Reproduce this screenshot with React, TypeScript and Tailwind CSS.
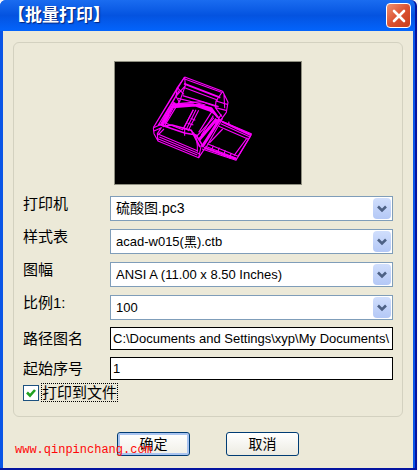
import React, { useState } from 'react';

const fields = [
  { id: 'printer', label: '打印机', options: ['硫酸图.pc3'], textSize: 'text-[14px]' },
  { id: 'style', label: '样式表', options: ['acad-w015(黑).ctb'], textSize: 'text-[13px]' },
  { id: 'paper', label: '图幅', options: ['ANSI A (11.00 x 8.50 Inches)'], textSize: 'text-[13px]' },
  { id: 'scale', label: '比例1:', options: ['100'], textSize: 'text-[13px]' },
];

function Preview() {
  return (
    <svg
      viewBox="29 21 558 366"
      className="mx-auto h-[124px] w-[188px] border border-[#8f8f80] bg-black"
      fill="none"
      stroke="#fa00fa"
      strokeWidth="3.4"
      strokeLinejoin="round"
      aria-label="预览"
    >
      {/* upper rail */}
      <path d="M238 66 352 109 M238 72 348 112 M238 98 338 136 M232 122 340 155 M218 130 300 150" />
      <path d="M236 86 345 128" strokeWidth="6" />
      <path d="M352 109 368 142 363 172 345 197 M352 109 332 138 330 158 350 185 M332 138 366 148 M330 158 362 166 M356 118 358 160" />
      <path d="M238 66 216 98 212 124 222 142 M238 66 240 92 222 142 M216 98 236 118 M212 124 240 92" />
      {/* left rails */}
      <path d="M238 66 144 218 M216 98 150 208 M222 106 158 212 M212 124 166 208 M224 136 178 212" />
      <path d="M208 142 168 212" strokeWidth="8" />
      {/* opening */}
      <path d="M202 156 280 150 318 160 338 188 M206 148 262 148 324 170" strokeWidth="7" />
      <path d="M204 158 180 204 232 224 264 164 M218 146 290 140 336 156 M190 180 172 214" />
      <path d="M264 164 234 222 M272 164 242 224 M280 166 248 228 M318 172 280 232 M324 182 288 240 M306 160 342 190" />
      <path d="M256 190 270 196 M246 204 264 210" />
      {/* right rails */}
      <path d="M344 192 290 276 M334 192 280 256" strokeWidth="9" />
      <path d="M352 190 298 284 M326 188 272 246 M348 178 330 206" />
      {/* lower front */}
      <path d="M160 208 238 234 272 240 292 272 M172 214 200 210 258 226 284 276" strokeWidth="5" />
      <path d="M144 218 146 236 158 258 280 308 296 284 M144 218 164 210 M156 236 278 288 M162 246 282 296 M154 250 276 300 M146 228 168 218 156 236 158 258" />
      <path d="M238 220 238 242 M176 222 158 240 M264 232Q278 250 276 290 M288 270 280 308" />
      {/* tab */}
      <path d="M342 196 438 236 434 246 392 316 290 282 M370 200 372 210 M346 206 434 246 M340 214 428 252 M306 266 398 304 M300 274 394 310" />
      <path d="M350 200 436 240 M296 278 392 312" strokeWidth="6" />
      <path d="M352 222 312 264 M426 248 386 302 M438 238 398 304 M324 272 318 288 M342 278 336 294 M360 286 354 302 M378 294 372 310" />
    </svg>
  );
}

function Chevron() {
  return (
    <span className="pointer-events-none absolute inset-y-0.5 right-0.5 flex w-[18px] items-center justify-center rounded-sm bg-linear-to-b from-[#d0defc] to-[#b4c8f6]">
      <svg viewBox="0 0 10 8" className="h-2 w-2.5" fill="none" stroke="#4d6185" strokeWidth="2.6">
        <path d="M1 1.5 5 5.5 9 1.5" />
      </svg>
    </span>
  );
}

export default function App() {
  const [toFile, setToFile] = useState(true);
  const [path, setPath] = useState('C:\\Documents and Settings\\xyp\\My Documents\\');
  const [start, setStart] = useState('1');

  return (
    <div className="min-h-screen bg-[#f4f4fa] pr-px font-['Liberation_Sans','Noto_Sans_CJK_SC',sans-serif] text-[15px] text-black">
      <div className="flex min-h-screen flex-col rounded-t-md border-r-2 border-b-3 border-[#0414a0] bg-[#0a55e6]">
        <header className="flex h-[31px] items-center justify-between rounded-t-md bg-linear-to-b from-[#1a6cf0] via-[#0453e0] to-[#0364fc] pr-1 pl-2">
          <h1 className="text-[17px] font-bold text-white [text-shadow:1px_1px_1px_#04247c]">【批量打印】</h1>
          <button
            type="button"
            aria-label="关闭"
            className="flex size-[25px] items-center justify-center rounded border border-white bg-linear-to-br from-[#ee9070] via-[#dc5232] to-[#c83c18]"
          >
            <svg viewBox="0 0 14 14" className="size-3.5" stroke="#fff" strokeWidth="2.6" strokeLinecap="round">
              <path d="M2 2 12 12 M12 2 2 12" />
            </svg>
          </button>
        </header>

        <form
          className="relative mr-0.5 ml-[3px] flex grow flex-col bg-[#ece9d8] px-2.5 pt-[11px] pb-3"
          onSubmit={(e) => e.preventDefault()}
        >
          <div className="rounded-md border border-[#d3d1c0] px-[9px] pt-[18px] pb-3.5">
            <Preview />

            <div className="mt-[11px] grid grid-cols-[87px_1fr] gap-y-2">
              {fields.map((field) => (
                <React.Fragment key={field.id}>
                  <label htmlFor={field.id} className="leading-4">
                    {field.label}
                  </label>
                  <div className="relative">
                    <select
                      id={field.id}
                      className={`block h-[25px] w-full appearance-none border border-[#7f9db9] bg-white pl-[5px] outline-none ${field.textSize}`}
                    >
                      {field.options.map((option) => (
                        <option key={option}>{option}</option>
                      ))}
                    </select>
                    <Chevron />
                  </div>
                </React.Fragment>
              ))}
            </div>

            <div className="mt-[7px] grid grid-cols-[87px_1fr] items-center gap-y-[7px]">
              <label htmlFor="path" className="leading-4">路径图名</label>
              <input
                id="path"
                value={path}
                onChange={(e) => setPath(e.target.value)}
                className="h-[23px] w-full min-w-0 border border-black bg-white pl-0.5 text-[13px] outline-none"
              />
              <label htmlFor="start" className="leading-4">起始序号</label>
              <input
                id="start"
                value={start}
                onChange={(e) => setStart(e.target.value)}
                className="h-[23px] w-full min-w-0 border border-black bg-white pl-0.5 text-[13px] outline-none"
              />
            </div>

            <div className="mt-[3px] flex items-center gap-0.5">
              <span className="relative size-4">
                <input
                  id="to-file"
                  type="checkbox"
                  checked={toFile}
                  onChange={(e) => setToFile(e.target.checked)}
                  className="block size-4 appearance-none border border-[#1c5180] bg-white"
                />
                {toFile && (
                  <svg viewBox="0 0 16 16" className="pointer-events-none absolute inset-0" fill="none" stroke="#21a121" strokeWidth="2.6">
                    <path d="M4 7.5 7 10.5 12 5" />
                  </svg>
                )}
              </span>
              <label htmlFor="to-file" className="border border-dotted border-black leading-[17px]">
                打印到文件
              </label>
            </div>
          </div>

          <div className="mt-[15px] flex justify-center gap-9">
            <button
              type="submit"
              className="h-6 w-[73px] rounded-[3px] border border-[#003c74] bg-linear-to-b from-white to-[#f0efe6] text-[14px] leading-5 shadow-[inset_0_0_0_2px_#a9c4f0]"
            >
              确定
            </button>
            <button
              type="button"
              className="h-6 w-[73px] rounded-[3px] border border-[#003c74] bg-linear-to-b from-white to-[#ecebe2] text-[14px] leading-5"
            >
              取消
            </button>
          </div>

          <span className="pointer-events-none absolute bottom-2.5 left-3 font-['Liberation_Mono',monospace] text-xs text-[#ff0808]">
            www.qinpinchang.com
          </span>
        </form>
      </div>
    </div>
  );
}
